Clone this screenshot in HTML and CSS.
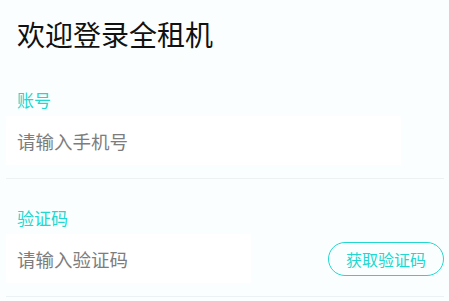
FILE: index.html
```html
<!DOCTYPE html>
<html lang="zh-CN">
<head>
    <meta charset="UTF-8">
    <meta name="viewport" content="width=device-width, initial-scale=1.0">
    <title>登录</title>
    <link rel="stylesheet" href="styles.css">
</head>
<body>
    <div class="page">
        <h1 class="title">欢迎登录全租机</h1>
        <form action="#" class="login">
            <div class="field">
                <label for="phone" class="field-label">账号</label>
                <div class="field-row">
                    <input type="tel" id="phone" class="field-input phone" placeholder="请输入手机号">
                </div>
            </div>
            <div class="field">
                <label for="code" class="field-label">验证码</label>
                <div class="field-row">
                    <input type="text" id="code" class="field-input code" placeholder="请输入验证码">
                    <button type="button" class="code-btn">获取验证码</button>
                </div>
            </div>
        </form>
    </div>
</body>
</html>
```

FILE: styles.css
```css
*{
    margin: 0;
    padding: 0;
    box-sizing: border-box;
}
:root{
    --bg: #fbfeff;
    --teal: #20d8cf;
    --line: #ecf2f4;
    --placeholder: #7d7d7d;
    --font: "Noto Sans CJK SC", "Noto Sans", sans-serif;
}
body{
    background-color: var(--bg);
    font-family: var(--font);
}
.page{
    padding: 14px 5px 0 6px;
}
.title{
    font-size: 28px;
    font-weight: 400;
    line-height: 40px;
    color: #111;
    padding-left: 11px;
}
.login{
    display: flex;
    flex-direction: column;
    margin-top: 34px;
    gap: 27px;
}
.field-label{
    display: block;
    font-size: 17px;
    line-height: 24px;
    color: var(--teal);
    padding-left: 11px;
}
.field-row{
    display: flex;
    align-items: center;
    justify-content: space-between;
    padding: 4px 0 13px 0;
    border-bottom: 1px solid var(--line);
}
.field-input{
    height: 49px;
    border: none;
    outline: none;
    background: #fff;
    padding-left: 11px;
    font-family: var(--font);
    font-size: 18.5px;
    color: #333;
}
.field-input::placeholder{
    color: var(--placeholder);
}
.phone{
    width: 395px;
}
.code{
    width: 245px;
}
.code-btn{
    width: 116px;
    height: 34px;
    border: 1px solid var(--teal);
    border-radius: 17px;
    background: transparent;
    color: var(--teal);
    font-family: var(--font);
    font-size: 16px;
    cursor: pointer;
}
```
